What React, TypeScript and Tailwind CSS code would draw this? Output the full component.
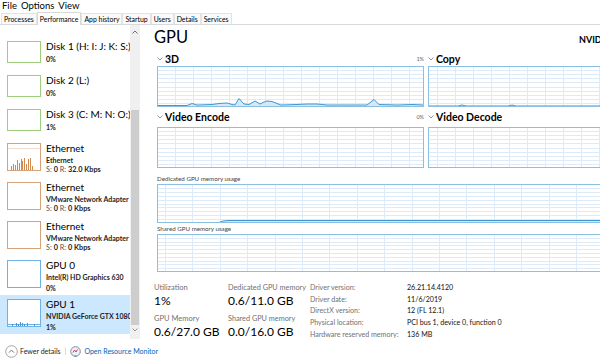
import React from "react";

type Pt = [number, number];

function Grid({ w, h, step, offset, rows }: { w: number; h: number; step: number; offset: number; rows: number }) {
  const vx: number[] = [];
  for (let x = offset; x < w; x += step) vx.push(Math.round(x));
  const hy: number[] = [];
  for (let i = 1; i < rows; i++) hy.push(Math.round((i * h) / rows));
  return (
    <g>
      {vx.map((x) => (
        <line key={"v" + x} x1={x + 0.5} y1={0} x2={x + 0.5} y2={h} stroke="#dcebf7" strokeWidth={1} />
      ))}
      {hy.map((y) => (
        <line key={"h" + y} x1={0} y1={y + 0.5} x2={w} y2={y + 0.5} stroke="#dcebf7" strokeWidth={1} />
      ))}
    </g>
  );
}

function Chart({ w, h, step, offset, pts, rows = 10 }: { w: number; h: number; step: number; offset: number; pts?: Pt[]; rows?: number }) {
  const line = pts ? pts.map((p) => `${p[0]},${p[1]}`).join(" ") : "";
  const area = pts ? `0,${h} ${line} ${w},${h}` : "";
  return (
    <svg width={w} height={h} className="block shrink-0">
      <rect x={0} y={0} width={w} height={h} fill="#ffffff" />
      <Grid w={w} h={h} step={step} offset={offset} rows={rows} />
      {pts && <polygon points={area} fill="#d4e8f7" />}
      {pts && <polyline points={line} fill="none" stroke="#3e97d4" strokeWidth={1} />}
      <rect x={0.5} y={0.5} width={w - 1} height={h - 1} fill="none" stroke="#8cc0e3" strokeWidth={1} />
    </svg>
  );
}

function Chevron() {
  return (
    <svg width={6} height={4} viewBox="0 0 6 4" className="block shrink-0">
      <polyline points="0.5,0.5 3,3 5.5,0.5" fill="none" stroke="#8a8a8a" strokeWidth={0.9} />
    </svg>
  );
}

function Thumb({ kind, h }: { kind: "disk" | "eth" | "eth0" | "gpu" | "gpu1"; h: number }) {
  const w = 34;
  const border = kind === "disk" ? "#9ccf7c" : kind.startsWith("eth") ? "#d6a27a" : "#6eb1e2";
  return (
    <svg width={w} height={h} className="block shrink-0">
      <rect x={0} y={0} width={w} height={h} fill="#ffffff" />
      {kind === "eth" && (
        <g>
          <line x1={1} y1={5.5} x2={w - 1} y2={5.5} stroke="#f1dccb" />
          {[
            [4, 4], [6, 6], [8, 5], [10, 10], [12, 7], [14, 11], [15, 9], [17, 12], [19, 6], [21, 11], [23, 12], [25, 4],
          ].map(([x, hh], i) => (
            <rect key={i} x={x} y={h - 1 - hh} width={1} height={hh} fill="#cf8a52" />
          ))}
        </g>
      )}
      {kind === "gpu1" && (
        <g>
          <line x1={1} y1={h - 2.5} x2={w - 1} y2={h - 2.5} stroke="#6eb1e2" strokeWidth={1} />
          {[
            [5, 2], [9, 3], [11, 2], [13, 4], [15, 3], [17, 2], [20, 3], [27, 2],
          ].map(([x, hh], i) => (
            <rect key={i} x={x} y={h - 1 - hh} width={1} height={hh} fill="#3e97d4" />
          ))}
        </g>
      )}
      <rect x={0.5} y={0.5} width={w - 1} height={h - 1} fill="none" stroke={border} strokeWidth={1} />
    </svg>
  );
}

function SideItem({
  kind,
  name,
  sub,
  pct,
  speed,
  selected,
}: {
  kind: "disk" | "eth" | "eth0" | "gpu" | "gpu1";
  name: string;
  sub?: string;
  pct?: string;
  speed?: string;
  selected?: boolean;
}) {
  const tall = kind !== "disk";
  return (
    <div
      className={`flex w-[130px] shrink-0 gap-[5px] pl-[7px] ${tall ? "h-[39px] pt-[4px]" : "h-[34px] pt-[4px]"} ${
        selected ? "bg-[#cce8ff]" : ""
      }`}
    >
      <Thumb kind={kind} h={tall ? 28 : 22} />
      <div className="flex min-w-0 flex-col leading-none">
        <div className="whitespace-nowrap text-[10px] leading-[11px] text-black">{name}</div>
        {sub && <div className="mt-[2px] whitespace-nowrap text-[7px] font-bold leading-[8px] text-[#222]">{sub}</div>}
        {pct && <div className="mt-[3px] whitespace-nowrap text-[7px] font-bold leading-[8px] text-[#222]">{pct}</div>}
        {speed && (
          <div className="mt-[2px] whitespace-nowrap text-[7.3px] leading-[8px] text-[#555]">
            S: <span className="font-bold text-[#222]">0</span> R: <span className="font-bold text-[#222]">{speed}</span>
          </div>
        )}
      </div>
    </div>
  );
}

const pts3d: Pt[] = [
  [0, 39.5], [30, 39.5], [35, 37.5], [40, 39], [55, 38.5], [62, 37.5], [70, 37], [75, 38.5], [78, 39], [82, 32.5], [87, 38], [92, 38.5],
  [98, 35], [103, 38], [106, 36.5], [110, 35], [115, 35.5], [120, 37.5], [124, 39], [140, 38.5], [150, 38], [160, 38], [170, 39],
  [210, 39], [217, 33.5], [222, 38.5], [240, 39], [255, 38.5], [267, 39],
];

const ptsCopy: Pt[] = [
  [0, 40], [30, 40], [34, 39], [38, 40], [80, 40], [84, 39], [88, 40], [267, 40],
];

const ptsDed: Pt[] = [
  [0, 38.5], [62, 38.5], [66, 37], [72, 36.5], [560, 36.5],
];

const tabs = ["Processes", "Performance", "App history", "Startup", "Users", "Details", "Services"];

export default function App() {
  return (
    <div className="relative flex h-[362px] w-[600px] flex-col overflow-hidden bg-white font-['Lato',sans-serif] text-black">
      {/* menu */}
      <div className="flex h-[12px] shrink-0 items-center gap-[4px] pl-[2px] text-[9.5px] leading-[12px]">
        <span>File</span>
        <span>Options</span>
        <span>View</span>
      </div>
      {/* tabs */}
      <div className="flex h-[13px] shrink-0 items-end border-b border-[#d9d9d9] pl-[1px]">
        {tabs.map((t) => (
          <div
            key={t}
            className={`whitespace-nowrap border border-b-0 px-[2px] text-[6.9px] leading-[10px] ${
              t === "Performance"
                ? "-mb-px h-[13px] border-[#d9d9d9] bg-white pt-[1px]"
                : "h-[11px] border-[#e3e3e3] bg-[#fafafa]"
            }`}
          >
            {t}
          </div>
        ))}
      </div>

      <div className="flex h-[315px] shrink-0">
        {/* sidebar */}
        <div className="flex w-[140px] shrink-0">
          <div className="flex w-[130px] flex-col pt-[12px]">
            <SideItem kind="disk" name="Disk 1 (H: I: J: K: S:)" pct="0%" />
            <SideItem kind="disk" name="Disk 2 (L:)" pct="0%" />
            <SideItem kind="disk" name="Disk 3 (C: M: N: O:)" pct="1%" />
            <SideItem kind="eth" name="Ethernet" sub="Ethernet" speed="32.0 Kbps" />
            <SideItem kind="eth0" name="Ethernet" sub="VMware Network Adapter" speed="0 Kbps" />
            <SideItem kind="eth0" name="Ethernet" sub="VMware Network Adapter" speed="0 Kbps" />
            <SideItem kind="gpu" name="GPU 0" sub="Intel(R) HD Graphics 630" pct="0%" />
            <SideItem kind="gpu1" name="GPU 1" sub="NVIDIA GeForce GTX 1080" pct="1%" selected />
          </div>
          <div className="flex h-[314px] w-[10px] flex-col bg-[#f0f0f0] pt-[2px]">
            <div className="flex h-[10px] shrink-0 items-center justify-center">
              <svg width={6} height={4} viewBox="0 0 6 4">
                <polyline points="0.5,3.5 3,1 5.5,3.5" fill="none" stroke="#606060" strokeWidth={0.9} />
              </svg>
            </div>
            <div className="mt-[73px] h-[215px] w-[8px] shrink-0 self-center bg-[#cdcdcd]" />
            <div className="flex h-[10px] shrink-0 items-center justify-center">
              <Chevron />
            </div>
          </div>
        </div>

        {/* main */}
        <div className="flex min-w-0 flex-1 flex-col pl-[14px]">
          <div className="grid h-[28px] shrink-0 grid-cols-[425px_auto] items-start">
            <div className="pt-[2px] text-[16.5px] leading-[20px] text-black">GPU</div>
            <div className="whitespace-nowrap pt-[9px] text-[9px] font-bold leading-[12px]">NVIDIA GeForce GTX 1080</div>
          </div>
          <div className="flex shrink-0 flex-col pl-[3px]">
            {/* 3D / Copy */}
            <div className="flex shrink-0 gap-[4px]">
              <div className="flex w-[267px] flex-col">
                <div className="flex h-[13px] shrink-0 items-start gap-[2px]">
                  <span className="mt-[4px]"><Chevron /></span>
                  <span className="text-[10.5px] font-bold leading-[12px]">3D</span>
                  <span className="ml-auto mt-[2px] text-[5.5px] leading-[8px] text-[#666]">1%</span>
                </div>
                <Chart w={267} h={41} step={18} offset={18} pts={pts3d} />
              </div>
              <div className="flex w-[267px] flex-col">
                <div className="flex h-[13px] shrink-0 items-start gap-[2px]">
                  <span className="mt-[4px]"><Chevron /></span>
                  <span className="text-[10.5px] font-bold leading-[12px]">Copy</span>
                </div>
                <Chart w={267} h={41} step={18} offset={9} pts={ptsCopy} />
              </div>
            </div>
            {/* encode / decode */}
            <div className="flex shrink-0 gap-[4px]">
              <div className="flex w-[267px] flex-col">
                <div className="flex h-[20px] shrink-0 items-center gap-[2px]">
                  <Chevron />
                  <span className="text-[10.5px] font-bold leading-[12px]">Video Encode</span>
                  <span className="ml-auto text-[5.5px] text-[#666]">0%</span>
                </div>
                <Chart w={267} h={41} step={18} offset={18} />
              </div>
              <div className="flex w-[267px] flex-col">
                <div className="flex h-[20px] shrink-0 items-center gap-[2px]">
                  <Chevron />
                  <span className="text-[10.5px] font-bold leading-[12px]">Video Decode</span>
                </div>
                <Chart w={267} h={41} step={18} offset={9} />
              </div>
            </div>
            {/* dedicated */}
            <div className="flex h-[16px] shrink-0 items-end pb-[1px] text-[6.2px] leading-[8px] text-[#444]">Dedicated GPU memory usage</div>
            <Chart w={560} h={39} step={27.4} offset={8} pts={ptsDed} />
            <div className="flex h-[11px] shrink-0 items-end pb-[1px] text-[6.2px] leading-[8px] text-[#444]">Shared GPU memory usage</div>
            <Chart w={560} h={38} step={27.4} offset={8} />
          </div>

          {/* stats */}
          <div className="flex shrink-0 pt-[11px]">
            <div className="flex w-[74px] flex-col">
              <div className="text-[7.5px] leading-[9px] text-[#707070]">Utilization</div>
              <div className="text-[12px] leading-[18px]">1%</div>
              <div className="mt-[4px] text-[7.5px] leading-[9px] text-[#707070]">GPU Memory</div>
              <div className="whitespace-nowrap text-[12px] leading-[18px]">0.6/27.0 GB</div>
            </div>
            <div className="flex w-[82px] flex-col">
              <div className="whitespace-nowrap text-[7.3px] leading-[9px] text-[#707070]">Dedicated GPU memory</div>
              <div className="whitespace-nowrap text-[12px] leading-[18px]">0.6/11.0 GB</div>
              <div className="mt-[4px] whitespace-nowrap text-[7.3px] leading-[9px] text-[#707070]">Shared GPU memory</div>
              <div className="whitespace-nowrap text-[12px] leading-[18px]">0.0/16.0 GB</div>
            </div>
            <div className="-mt-[1px] flex flex-col text-[7.1px] leading-[11.7px]">
              {[
                ["Driver version:", "26.21.14.4120"],
                ["Driver date:", "11/6/2019"],
                ["DirectX version:", "12 (FL 12.1)"],
                ["Physical location:", "PCI bus 1, device 0, function 0"],
                ["Hardware reserved memory:", "136 MB"],
              ].map(([k, v]) => (
                <div key={k} className="flex whitespace-nowrap">
                  <span className="w-[97px] text-[#707070]">{k}</span>
                  <span className="text-[#111]">{v}</span>
                </div>
              ))}
            </div>
          </div>
        </div>
      </div>

      {/* bottom bar */}
      <div className="flex h-[22px] shrink-0 items-center bg-white pl-[5px] text-[7px] leading-[10px]">
        <svg width={13} height={13} viewBox="0 0 13 13" className="shrink-0">
          <circle cx={6.5} cy={6.5} r={5.8} fill="#fff" stroke="#9a9a9a" strokeWidth={0.9} />
          <polyline points="4,7.6 6.5,5.1 9,7.6" fill="none" stroke="#707070" strokeWidth={1} />
        </svg>
        <span className="ml-[2px] text-[#222]">Fewer details</span>
        <span className="mx-[4px] text-[#b0b0b0]">|</span>
        <svg width={11} height={11} viewBox="0 0 11 11" className="shrink-0">
          <circle cx={5.5} cy={5.5} r={4.8} fill="#eef2f8" stroke="#6a7fa8" strokeWidth={0.9} />
          <path d="M3 6.5 L4.5 4 L6 6 L7.5 3.5" fill="none" stroke="#d04040" strokeWidth={1} />
          <rect x={4.5} y={9.5} width={2} height={1.2} fill="#6a7fa8" />
        </svg>
        <span className="ml-[3px] text-[#0063b1]">Open Resource Monitor</span>
      </div>
    </div>
  );
}
